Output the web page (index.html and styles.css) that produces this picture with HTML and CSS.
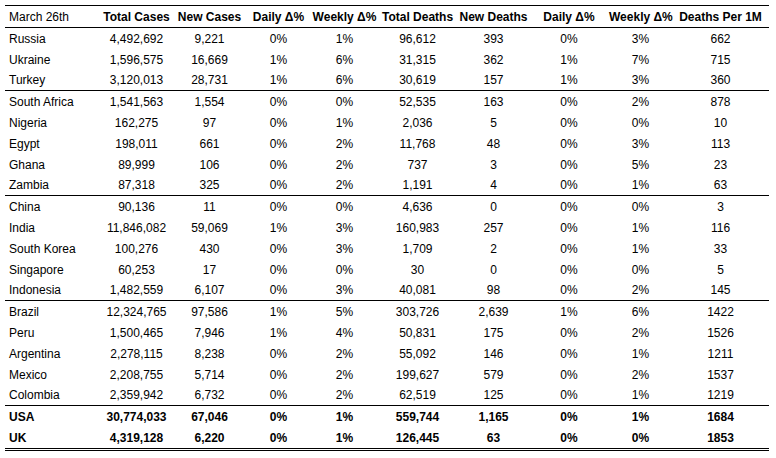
FILE: index.html
```html
<!DOCTYPE html>
<html>
<head>
<meta charset="utf-8">
<link rel="stylesheet" href="styles.css">
</head>
<body>
<div class="sheet">
  <div class="row head">
    <div class="c name">March 26th</div><div class="c">Total Cases</div><div class="c">New Cases</div><div class="c">Daily Δ%</div><div class="c">Weekly Δ%</div><div class="c">Total Deaths</div><div class="c">New Deaths</div><div class="c">Daily Δ%</div><div class="c">Weekly Δ%</div><div class="c">Deaths Per 1M</div>
  </div>
  <div class="row"><div class="c name">Russia</div><div class="c">4,492,692</div><div class="c">9,221</div><div class="c">0%</div><div class="c">1%</div><div class="c">96,612</div><div class="c">393</div><div class="c">0%</div><div class="c">3%</div><div class="c">662</div></div>
  <div class="row"><div class="c name">Ukraine</div><div class="c">1,596,575</div><div class="c">16,669</div><div class="c">1%</div><div class="c">6%</div><div class="c">31,315</div><div class="c">362</div><div class="c">1%</div><div class="c">7%</div><div class="c">715</div></div>
  <div class="row last"><div class="c name">Turkey</div><div class="c">3,120,013</div><div class="c">28,731</div><div class="c">1%</div><div class="c">6%</div><div class="c">30,619</div><div class="c">157</div><div class="c">1%</div><div class="c">3%</div><div class="c">360</div></div>

  <div class="row"><div class="c name">South Africa</div><div class="c">1,541,563</div><div class="c">1,554</div><div class="c">0%</div><div class="c">0%</div><div class="c">52,535</div><div class="c">163</div><div class="c">0%</div><div class="c">2%</div><div class="c">878</div></div>
  <div class="row"><div class="c name">Nigeria</div><div class="c">162,275</div><div class="c">97</div><div class="c">0%</div><div class="c">1%</div><div class="c">2,036</div><div class="c">5</div><div class="c">0%</div><div class="c">0%</div><div class="c">10</div></div>
  <div class="row"><div class="c name">Egypt</div><div class="c">198,011</div><div class="c">661</div><div class="c">0%</div><div class="c">2%</div><div class="c">11,768</div><div class="c">48</div><div class="c">0%</div><div class="c">3%</div><div class="c">113</div></div>
  <div class="row"><div class="c name">Ghana</div><div class="c">89,999</div><div class="c">106</div><div class="c">0%</div><div class="c">2%</div><div class="c">737</div><div class="c">3</div><div class="c">0%</div><div class="c">5%</div><div class="c">23</div></div>
  <div class="row last"><div class="c name">Zambia</div><div class="c">87,318</div><div class="c">325</div><div class="c">0%</div><div class="c">2%</div><div class="c">1,191</div><div class="c">4</div><div class="c">0%</div><div class="c">1%</div><div class="c">63</div></div>

  <div class="row"><div class="c name">China</div><div class="c">90,136</div><div class="c">11</div><div class="c">0%</div><div class="c">0%</div><div class="c">4,636</div><div class="c">0</div><div class="c">0%</div><div class="c">0%</div><div class="c">3</div></div>
  <div class="row"><div class="c name">India</div><div class="c">11,846,082</div><div class="c">59,069</div><div class="c">1%</div><div class="c">3%</div><div class="c">160,983</div><div class="c">257</div><div class="c">0%</div><div class="c">1%</div><div class="c">116</div></div>
  <div class="row"><div class="c name">South Korea</div><div class="c">100,276</div><div class="c">430</div><div class="c">0%</div><div class="c">3%</div><div class="c">1,709</div><div class="c">2</div><div class="c">0%</div><div class="c">1%</div><div class="c">33</div></div>
  <div class="row"><div class="c name">Singapore</div><div class="c">60,253</div><div class="c">17</div><div class="c">0%</div><div class="c">0%</div><div class="c">30</div><div class="c">0</div><div class="c">0%</div><div class="c">0%</div><div class="c">5</div></div>
  <div class="row last"><div class="c name">Indonesia</div><div class="c">1,482,559</div><div class="c">6,107</div><div class="c">0%</div><div class="c">3%</div><div class="c">40,081</div><div class="c">98</div><div class="c">0%</div><div class="c">2%</div><div class="c">145</div></div>

  <div class="row"><div class="c name">Brazil</div><div class="c">12,324,765</div><div class="c">97,586</div><div class="c">1%</div><div class="c">5%</div><div class="c">303,726</div><div class="c">2,639</div><div class="c">1%</div><div class="c">6%</div><div class="c">1422</div></div>
  <div class="row"><div class="c name">Peru</div><div class="c">1,500,465</div><div class="c">7,946</div><div class="c">1%</div><div class="c">4%</div><div class="c">50,831</div><div class="c">175</div><div class="c">0%</div><div class="c">2%</div><div class="c">1526</div></div>
  <div class="row"><div class="c name">Argentina</div><div class="c">2,278,115</div><div class="c">8,238</div><div class="c">0%</div><div class="c">2%</div><div class="c">55,092</div><div class="c">146</div><div class="c">0%</div><div class="c">1%</div><div class="c">1211</div></div>
  <div class="row"><div class="c name">Mexico</div><div class="c">2,208,755</div><div class="c">5,714</div><div class="c">0%</div><div class="c">2%</div><div class="c">199,627</div><div class="c">579</div><div class="c">0%</div><div class="c">2%</div><div class="c">1537</div></div>
  <div class="row last"><div class="c name">Colombia</div><div class="c">2,359,942</div><div class="c">6,732</div><div class="c">0%</div><div class="c">2%</div><div class="c">62,519</div><div class="c">125</div><div class="c">0%</div><div class="c">1%</div><div class="c">1219</div></div>

  <div class="row bold"><div class="c name">USA</div><div class="c">30,774,033</div><div class="c">67,046</div><div class="c">0%</div><div class="c">1%</div><div class="c">559,744</div><div class="c">1,165</div><div class="c">0%</div><div class="c">1%</div><div class="c">1684</div></div>
  <div class="row bold"><div class="c name">UK</div><div class="c">4,319,128</div><div class="c">6,220</div><div class="c">0%</div><div class="c">1%</div><div class="c">126,445</div><div class="c">63</div><div class="c">0%</div><div class="c">0%</div><div class="c">1853</div></div>
</div>
</body>
</html>
```
FILE: styles.css
```css
html, body {
  margin: 0;
  padding: 0;
  background: #ffffff;
}
body {
  font-family: "Liberation Sans", Arial, sans-serif;
  font-size: 12px;
  color: #000000;
}
.sheet {
  margin: 5px 0 0 5px;
  width: 764px;
  border-top: 1px solid #000;
  border-bottom: 3px double #000;
}
.row {
  display: grid;
  grid-template-columns: 94px 75px 71px 67px 65px 81px 71px 80px 63px 97px;
  height: 21px;
  box-sizing: border-box;
  align-items: center;
}
.row.head {
  height: 22px;
  border-bottom: 1px solid #000;
  font-weight: bold;
}
.row.head .name {
  font-weight: normal;
}
.row.last {
  border-bottom: 1px solid #000;
}
.row.bold {
  font-weight: bold;
}
.c {
  text-align: center;
  white-space: nowrap;
  line-height: 14px;
}
.c.name {
  text-align: left;
  padding-left: 4px;
}
```
